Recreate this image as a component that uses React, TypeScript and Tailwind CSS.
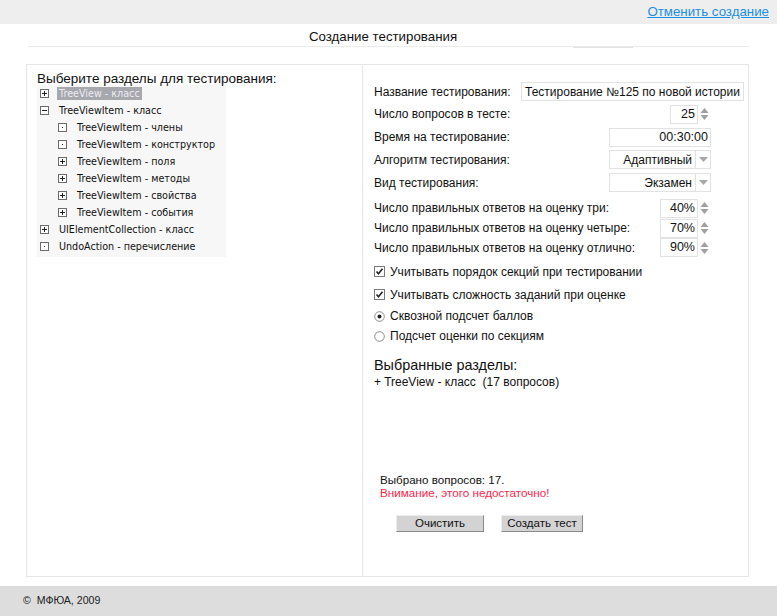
import React from 'react'

const arial = { fontFamily: '"Liberation Sans", Arial, sans-serif' }
const verdana = { fontFamily: '"DejaVu Sans", Verdana, sans-serif' }

type TreeIcon = 'plus' | 'minus' | 'dot'

const tree: { label: string; level: number; icon: TreeIcon; selected?: boolean }[] = [
  { label: 'TreeView - класс', level: 0, icon: 'plus', selected: true },
  { label: 'TreeViewItem - класс', level: 0, icon: 'minus' },
  { label: 'TreeViewItem - члены', level: 1, icon: 'dot' },
  { label: 'TreeViewItem - конструктор', level: 1, icon: 'dot' },
  { label: 'TreeViewItem - поля', level: 1, icon: 'plus' },
  { label: 'TreeViewItem - методы', level: 1, icon: 'plus' },
  { label: 'TreeViewItem - свойства', level: 1, icon: 'plus' },
  { label: 'TreeViewItem - события', level: 1, icon: 'plus' },
  { label: 'UIElementCollection - класс', level: 0, icon: 'plus' },
  { label: 'UndoAction - перечисление', level: 0, icon: 'dot' },
]

function NodeIcon({ kind }: { kind: TreeIcon }) {
  return (
    <svg width="9" height="9" viewBox="0 0 9 9" className="shrink-0">
      <rect x="0.5" y="0.5" width="8" height="8" fill="#fff" stroke="#6b6b6b" />
      {kind !== 'dot' && <line x1="2" y1="4.5" x2="7" y2="4.5" stroke="#222" />}
      {kind === 'plus' && <line x1="4.5" y1="2" x2="4.5" y2="7" stroke="#222" />}
      {kind === 'dot' && <rect x="4" y="4" width="1" height="1" fill="#222" />}
    </svg>
  )
}

function Spinner() {
  return (
    <div className="flex flex-col justify-center w-[12px] h-full pl-[1px]">
      <svg width="11" height="8" viewBox="0 0 11 8">
        <path d="M1.5 7 L5.5 2 L9.5 7 Z" fill="#a0a0a0" />
      </svg>
      <svg width="11" height="8" viewBox="0 0 11 8">
        <path d="M1.5 1 L5.5 6 L9.5 1 Z" fill="#a0a0a0" />
      </svg>
    </div>
  )
}

function NumberBox({ value, width }: { value: string; width: string }) {
  return (
    <div className="flex items-center h-[19px]">
      <div className={`${width} h-full border border-[#e2e2e2] flex items-center justify-end pr-[2px] text-[12.5px] text-[#111]`}>
        {value}
      </div>
      <Spinner />
    </div>
  )
}

function SelectBox({ value }: { value: string }) {
  return (
    <div className="flex items-center w-[102px] h-[19px] border border-[#e2e2e2]">
      <div className="flex-1 text-right pr-[3px] text-[12px] text-[#111]">{value}</div>
      <div className="w-[15px] h-full border-l border-[#e2e2e2] flex items-center justify-center">
        <svg width="11" height="7" viewBox="0 0 11 7">
          <path d="M1 1 L5.5 6 L10 1 Z" fill="#a8a8a8" />
        </svg>
      </div>
    </div>
  )
}

function Row({ label, h, children }: { label: string; h: string; children: React.ReactNode }) {
  return (
    <div className={`flex items-center justify-between ${h}`}>
      <span className="text-[12px] text-[#111]">{label}</span>
      {children}
    </div>
  )
}

function Check({ label }: { label: string }) {
  return (
    <div className="flex items-center gap-[5px] h-[23px]">
      <svg width="11" height="11" viewBox="0 0 11 11">
        <rect x="0.5" y="0.5" width="10" height="10" fill="#fff" stroke="#7a7a7a" />
        <path d="M2.5 5.5 L4.5 7.8 L8.5 2.8" fill="none" stroke="#222" strokeWidth="1.6" />
      </svg>
      <span className="text-[12px] text-[#111]">{label}</span>
    </div>
  )
}

function Radio({ label, checked }: { label: string; checked?: boolean }) {
  return (
    <div className="flex items-center gap-[5px] h-[20px]">
      <svg width="11" height="11" viewBox="0 0 11 11">
        <circle cx="5.5" cy="5.5" r="4.8" fill="#fff" stroke="#8a8a8a" />
        {checked && <circle cx="5.5" cy="5.5" r="2" fill="#222" />}
      </svg>
      <span className="text-[12px] text-[#111]">{label}</span>
    </div>
  )
}

function Button({ children, w }: { children: React.ReactNode; w: string }) {
  return (
    <button
      className={`${w} h-[17px] bg-[#d3d3d3] border border-t-[#ececec] border-l-[#ececec] border-r-[#8a8a8a] border-b-[#8a8a8a] text-[11.5px] text-[#111] leading-none`}
    >
      {children}
    </button>
  )
}

export default function App() {
  return (
    <div style={arial} className="w-[777px] h-[616px] bg-white flex flex-col overflow-hidden">
      <header className="h-[24px] bg-[#eeeeee] flex items-center justify-end pr-[8px] shrink-0">
        <a href="#" className="text-[13.3px] text-[#1a8fe3] underline">Отменить создание</a>
      </header>

      <div className="mx-[28px] mt-[3px] h-[20px] pr-[11px] border-b border-[#ebebeb] flex items-end justify-center relative shrink-0">
        <span className="text-[13.3px] text-[#111] leading-none pb-[3px]">Создание тестирования</span>
        <div className="absolute right-[116px] -bottom-[2px] w-[60px] h-[1px] bg-[#e3e3e3]" />
      </div>

      <main className="mx-[26px] mt-[17px] h-[513px] border border-[#e6e6e6] flex shrink-0 w-[723px]">
        <section className="w-[336px] border-r border-[#e6e6e6] pl-[10px] pt-[7px]">
          <h2 className="text-[13.5px] text-[#111] leading-[13px]">Выберите разделы для тестирования:</h2>
          <ul style={verdana} className="w-[189px] bg-[#f7f7f7] pb-[2px]">
            {tree.map((n) => (
              <li
                key={n.label}
                className={`flex items-center h-[17px] gap-[8px] ${n.level === 1 ? 'pl-[21px]' : 'pl-[3px]'}`}
              >
                <NodeIcon kind={n.icon} />
                <span
                  className={`text-[9.6px] leading-[13px] px-[2px] whitespace-nowrap ${n.selected ? 'bg-[#a7a7ae] text-[#ececf0]' : 'text-[#111]'}`}
                >
                  {n.label}
                </span>
              </li>
            ))}
          </ul>
        </section>

        <section className="flex-1 pl-[11px] pr-[4px] pt-[16px] flex flex-col">
          <Row label="Название тестирования:" h="h-[21px]">
            <div className="w-[223px] h-[19px] border border-[#e2e2e2] flex items-center pl-[3px] text-[12px] text-[#111] whitespace-nowrap overflow-hidden">
              Тестирование №125 по новой истории
            </div>
          </Row>
          <Row label="Число вопросов в тесте:" h="h-[24px]">
            <div className="mr-[34px]"><NumberBox value="25" width="w-[28px]" /></div>
          </Row>
          <Row label="Время на тестирование:" h="h-[22px]">
            <div className="mr-[33px] w-[102px] h-[19px] border border-[#e2e2e2] flex items-center justify-end pr-[2px] text-[12.5px] text-[#111]">
              00:30:00
            </div>
          </Row>
          <Row label="Алгоритм тестирования:" h="h-[23px]">
            <div className="mr-[33px]"><SelectBox value="Адаптивный" /></div>
          </Row>
          <Row label="Вид тестирования:" h="h-[23px]">
            <div className="mr-[33px]"><SelectBox value="Экзамен" /></div>
          </Row>
          <Row label="Число правильных ответов на оценку три:" h="h-[20px] mt-[4px]">
            <div className="mr-[34px]"><NumberBox value="40%" width="w-[38px]" /></div>
          </Row>
          <Row label="Число правильных ответов на оценку четыре:" h="h-[20px]">
            <div className="mr-[34px]"><NumberBox value="70%" width="w-[38px]" /></div>
          </Row>
          <Row label="Число правильных ответов на оценку отлично:" h="h-[19px]">
            <div className="mr-[34px]"><NumberBox value="90%" width="w-[38px]" /></div>
          </Row>

          <div className="mt-[3px] flex flex-col">
            <Check label="Учитывать порядок секций при тестировании" />
            <Check label="Учитывать сложность заданий при оценке" />
            <Radio label="Сквозной подсчет баллов" checked />
            <Radio label="Подсчет оценки по секциям" />
          </div>

          <h3 className="mt-[10px] text-[14.4px] text-[#111] leading-[18px]">Выбранные разделы:</h3>
          <p className="text-[12px] text-[#111] leading-[16px] whitespace-pre">+ TreeView - класс  (17 вопросов)</p>

          <div className="mt-[83px] pl-[6px] leading-[13px]">
            <p className="text-[11.6px] text-[#111]">Выбрано вопросов: 17.</p>
            <p className="text-[11.7px] text-[#ff1f4b]">Внимание, этого недостаточно!</p>
          </div>

          <div className="mt-[16px] pl-[22px] flex gap-[17px]">
            <Button w="w-[88px]">Очистить</Button>
            <Button w="w-[82px]">Создать тест</Button>
          </div>
        </section>
      </main>

      <footer className="mt-[9px] flex-1 bg-[#dddddd] flex items-center pl-[23px]">
        <span className="text-[10.6px] text-[#222] whitespace-pre">©  МФЮА, 2009</span>
      </footer>
    </div>
  )
}
